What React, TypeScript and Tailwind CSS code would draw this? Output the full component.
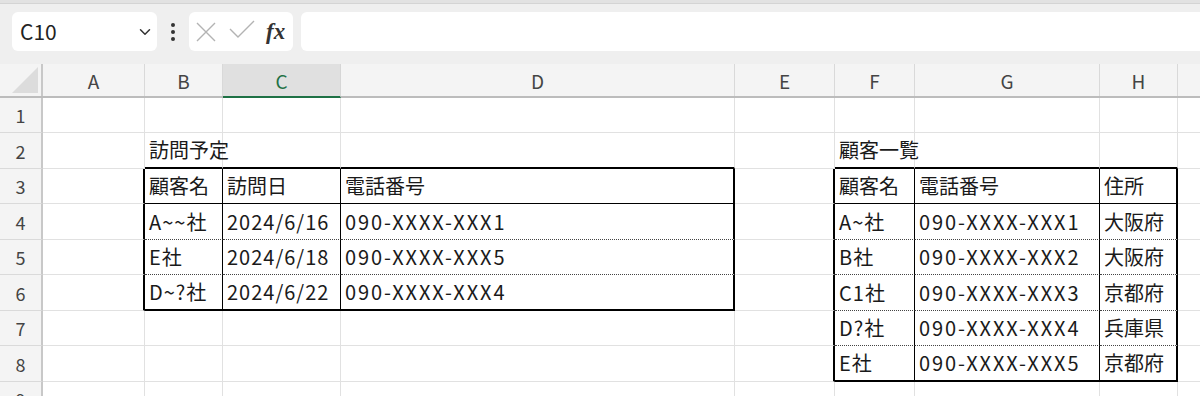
import { ChevronDown } from 'lucide-react';

const COLS = [
    { key: 'A', w: 'w-[102px]' },
    { key: 'B', w: 'w-[78px]' },
    { key: 'C', w: 'w-[118px]' },
    { key: 'D', w: 'w-[394px]' },
    { key: 'E', w: 'w-[100px]' },
    { key: 'F', w: 'w-[80px]' },
    { key: 'G', w: 'w-[185px]' },
    { key: 'H', w: 'w-[78px]' },
    { key: '', w: 'w-[60px]' },
];

const ROW_H = ['h-[35px]', 'h-[36px]', 'h-[35px]', 'h-[36px]', 'h-[35px]', 'h-[36px]', 'h-[35px]', 'h-[36px]', 'h-[35px]'];

// cell contents by row number, column index
const DATA: Record<number, Record<number, string>> = {
    2: { 1: '訪問予定', 5: '顧客一覧' },
    3: { 1: '顧客名', 2: '訪問日', 3: '電話番号', 5: '顧客名', 6: '電話番号', 7: '住所' },
    4: { 1: 'A~~社', 2: '2024/6/16', 3: '090-XXXX-XXX1', 5: 'A~社', 6: '090-XXXX-XXX1', 7: '大阪府' },
    5: { 1: 'E社', 2: '2024/6/18', 3: '090-XXXX-XXX5', 5: 'B社', 6: '090-XXXX-XXX2', 7: '大阪府' },
    6: { 1: 'D~?社', 2: '2024/6/22', 3: '090-XXXX-XXX4', 5: 'C1社', 6: '090-XXXX-XXX3', 7: '京都府' },
    7: { 5: 'D?社', 6: '090-XXXX-XXX4', 7: '兵庫県' },
    8: { 5: 'E社', 6: '090-XXXX-XXX5', 7: '京都府' },
};

const GRID_R = 'border-r border-r-[#e1e1e1]';
const THICK_R = 'border-r-2 border-r-black';
const THIN_R = 'border-r border-r-black';
const GRID_B = 'border-b border-b-[#e1e1e1]';
const THICK_B = 'border-b-2 border-b-black';
const THIN_B = 'border-b border-b-black';
const DOT_B = 'border-b border-b-[#444] [border-bottom-style:dotted]';

// tables: left = B..D rows 3..6, right = F..H rows 3..8
const TABLES = [
    { c0: 1, c1: 3, r0: 3, r1: 6 },
    { c0: 5, c1: 7, r0: 3, r1: 8 },
];

function rightBorder(r: number, c: number) {
    for (const t of TABLES) {
        if (r >= t.r0 && r <= t.r1) {
            if (c === t.c0 - 1 || c === t.c1) return THICK_R;
            if (c >= t.c0 && c < t.c1) return THIN_R;
        }
    }
    return GRID_R;
}

function bottomBorder(r: number, c: number) {
    for (const t of TABLES) {
        if (c >= t.c0 && c <= t.c1) {
            if (r === t.r0 - 1 || r === t.r1) return THICK_B;
            if (r === t.r0) return THIN_B;
            if (r > t.r0 && r < t.r1) return DOT_B;
        }
    }
    return GRID_B;
}

// latin runs are a bit wider in the original font, so space them out
function CellText({ text }: { text: string }) {
    const runs = text.match(/[\x20-\x7e]+|[^\x20-\x7e]+/g) ?? [];
    return (
        <>
            {runs.map((run, i) =>
                /[\x20-\x7e]/.test(run) ? (
                    <span key={i} className={run.includes('X') ? 'tracking-[1.9px]' : 'tracking-[1px]'}>
                        {run}
                    </span>
                ) : (
                    <span key={i}>{run}</span>
                )
            )}
        </>
    );
}

function FormulaBar() {
    return (
        <div className="h-[64px] bg-[#efefef] flex flex-col">
            <div className="h-[4px] bg-[#e2e2e2] border-b border-[#d4d4d4]" />
            <div className="flex items-center gap-[8px] pl-[12px] pt-[8px]">
                {/* Name box */}
                <div className="w-[145px] h-[39px] bg-white rounded-[6px] flex items-center justify-between pl-[8px] pr-[3px]">
                    <span className="text-[21px] text-[#222]">C10</span>
                    <ChevronDown className="w-[18px] h-[18px] text-[#333]" strokeWidth={2} />
                </div>
                {/* more */}
                <div className="w-[16px] flex flex-col items-center gap-[3px]">
                    <span className="w-[4px] h-[4px] rounded-full bg-[#333]" />
                    <span className="w-[4px] h-[4px] rounded-full bg-[#333]" />
                    <span className="w-[4px] h-[4px] rounded-full bg-[#333]" />
                </div>
                {/* cancel / enter / fx */}
                <div className="w-[104px] h-[39px] bg-white rounded-[6px] flex items-center pl-[7px]">
                    <svg width="20" height="20" viewBox="0 0 20 20" fill="none" stroke="#b3b3b3" strokeWidth="1.4">
                        <path d="M1 1 L19 19 M19 1 L1 19" />
                    </svg>
                    <svg width="26" height="18" viewBox="0 0 26 18" fill="none" stroke="#b3b3b3" strokeWidth="1.4" className="ml-[13px] -mt-[6px]">
                        <path d="M1 9 L9 17 L25 1" />
                    </svg>
                    <span className="ml-[11px] text-[23px] italic font-bold text-[#333] font-['Liberation_Serif',serif] leading-none">fx</span>
                </div>
                {/* formula input */}
                <div className="flex-1 h-[39px] bg-white rounded-l-[6px]" />
            </div>
        </div>
    );
}

function ColumnHeaders() {
    return (
        <div className="flex h-[34px] bg-[#f4f4f4] border-b-2 border-[#bcbcbc]">
            <div className="w-[43px] shrink-0 border-r-2 border-[#c8c8c8] relative overflow-hidden">
                <div className="absolute right-[3px] bottom-[3px] w-0 h-0 border-l-[26px] border-l-transparent border-b-[26px] border-b-[#dcdcdc]" />
            </div>
            {COLS.map((col, i) =>
                col.key === 'C' ? (
                    <div
                        key={i}
                        className={`${col.w} shrink-0 flex items-center justify-center bg-[#e0e0e0] border-r border-[#d6d6d6] border-b-2 border-b-[#1e7145] -mb-[2px] text-[19px] text-[#1e7145]`}
                    >
                        {col.key}
                    </div>
                ) : (
                    <div
                        key={i}
                        className={`${col.w} shrink-0 flex items-center justify-center border-r border-[#d9d9d9] text-[19px] text-[#444]`}
                    >
                        {col.key}
                    </div>
                )
            )}
        </div>
    );
}

function Row({ r }: { r: number }) {
    const cells = DATA[r] ?? {};
    return (
        <div className={`flex ${ROW_H[r - 1]}`}>
            <div className="w-[43px] shrink-0 bg-[#f4f4f4] border-r-2 border-r-[#c8c8c8] border-b border-b-[#dadada] flex items-center justify-center text-[18px] text-[#444]">
                {r}
            </div>
            {COLS.map((col, c) => (
                <div
                    key={c}
                    className={`${col.w} shrink-0 ${rightBorder(r, c)} ${bottomBorder(r, c)} flex items-center pl-[4px] text-[20px] text-[#1a1a1a] whitespace-nowrap`}
                >
                    {cells[c] ? <CellText text={cells[c]} /> : null}
                </div>
            ))}
        </div>
    );
}

export default function App() {
    return (
        <div className="w-[1200px] h-[396px] overflow-hidden bg-white font-['Noto_Sans_CJK_JP','Noto_Sans',sans-serif] leading-none">
            <FormulaBar />
            <ColumnHeaders />
            {[1, 2, 3, 4, 5, 6, 7, 8, 9].map((r) => (
                <Row key={r} r={r} />
            ))}
        </div>
    );
}
